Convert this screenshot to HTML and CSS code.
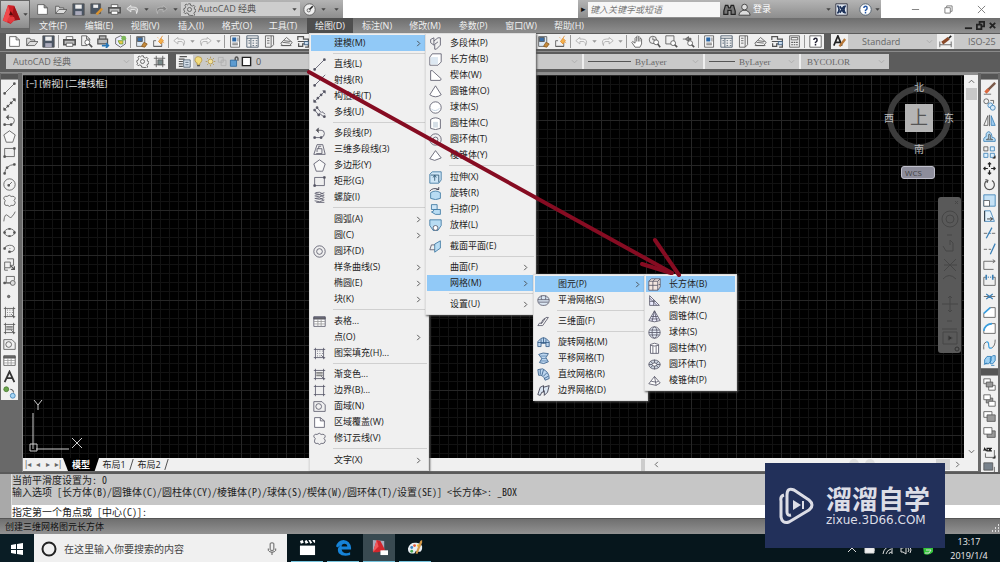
FILE: index.html
```html
<!DOCTYPE html>
<html lang="zh-CN">
<head>
<meta charset="utf-8">
<meta name="viewport" content="width=device-width, initial-scale=1">
<title>AutoCAD 经典</title>
<link rel="stylesheet" href="styles.css">
</head>
<body>
<svg class="sprite" aria-hidden="true">
  <!-- file and view commands -->
  <symbol id="new" viewBox="0 0 16 16"><path d="M2 2h8l4 4v8H2zM10 2v4h4" fill="#fff"/></symbol>
  <symbol id="open" viewBox="0 0 16 16"><path d="M2 13V4h4l1 2h5v2M2 13l4-5h10l-4 5z" fill="#ddd"/></symbol>
  <symbol id="save" viewBox="0 0 16 16"><path d="M1 1h14v14H1z" fill="#4a5563"/><path d="M4 2h8v5H4z" fill="#eee" stroke="none"/><path d="M4 10h8v5H4z" fill="#aab" stroke="none"/></symbol>
  <symbol id="saveas" viewBox="0 0 16 16"><path d="M1 1h12v12H1z" fill="#4a5563"/><path d="M4 2h6v4H4z" fill="#eee" stroke="none"/><path d="M8 14l7-7" stroke="#d9932f" stroke-width="3"/></symbol>
  <symbol id="print" viewBox="0 0 16 16"><path d="M4 6V2h8v4" fill="#fff"/><path d="M1 6h14v6H1z" fill="#bbb" stroke-width="2"/><path d="M4 10h8v4H4z" fill="#fff"/></symbol>
  <symbol id="preview" viewBox="0 0 16 16"><path d="M9 13H2V1h6l4 4v2M8 1v4h4"/><circle cx="9" cy="9" r="3" fill="#fff"/><path d="M11 11l4 4" stroke-width="2"/></symbol>
  <symbol id="publish" viewBox="0 0 16 16"><path d="M3 5V1h8v4M1 5h12v6H1z" fill="#bbb" stroke-width="1.5"/><path d="M6 13h8M11 10l3 3-3 3" stroke="#2777b8" stroke-width="2"/></symbol>
  <symbol id="dwf" viewBox="0 0 16 16"><path d="M2 4l6-3 6 3v7l-6 4-6-4z" fill="#eef"/><path d="M5 7h6v4H7z" fill="#efc84a" stroke="#68a038"/><circle cx="12" cy="4" r="3" fill="#7db85a" stroke="none"/></symbol>
  <symbol id="paste" viewBox="0 0 16 16"><path d="M2 2h10v12H2z" fill="#dce9f5"/><path d="M3 3h6v5H3z" fill="#3a6fa8"/><path d="M8 14l3-5 4 2-3 4z" fill="#c58a3a" stroke="#8a5a20"/></symbol>
  <symbol id="match" viewBox="0 0 16 16"><path d="M2 7h3M2 7v7h10V9M2 14h10"/><path d="M8 8l3-4 3 3-3 4z" fill="#f3b04a" stroke="#e08a2a"/><path d="M11 4l2-3M7 3l1 1M14 9l1 1" stroke="#e08a2a"/></symbol>
  <symbol id="undo" viewBox="0 0 16 16"><path d="M6 3L1 7l5 4V8h4q3 0 3 5 4-8-4-8H6z" fill="currentColor" fill-opacity=".25"/></symbol>
  <symbol id="redo" viewBox="0 0 16 16"><path d="M10 3l5 4-5 4V8H6q-3 0-3 5-4-8 4-8h3z" fill="currentColor" fill-opacity=".25"/></symbol>
  <symbol id="props" viewBox="0 0 16 16"><path d="M2 1h11v14H2z" fill="#fff"/><path d="M4 3h5v5H4z" fill="#2a66a5" stroke="none"/><path d="M4 10h7M4 12h7M11 3v5"/></symbol>
  <symbol id="center" viewBox="0 0 16 16"><path d="M1 1h14v14H1zM1 4h14M6 4v11M8 7h2M12 7h2M8 10h2M12 10h2M8 13h2M12 13h2M3 7h2M3 10h2" stroke="#456"/></symbol>
  <symbol id="palette" viewBox="0 0 16 16"><path d="M3 1h10v11l-3 3H3zM10 1v14M5 4h3M5 7h3M5 10h3"/></symbol>
  <symbol id="sheet" viewBox="0 0 16 16"><path d="M1 10l7-7 7 6-3 4H3zM3 9l9 1M5 7l8 1M1 13h13"/></symbol>
  <symbol id="markup" viewBox="0 0 16 16"><path d="M1 6V2h7v3h6v4M2 10v4h5v-3h7v4h-4M1 8h12" stroke-width="1.5"/><path d="M9 8h5v4H9z" fill="#cde" stroke="#357"/></symbol>
  <symbol id="calc" viewBox="0 0 16 16"><path d="M2 1h12v14H2zM4 3h8v3H4z"/><path d="M4 9h2M7 9h2M10 9h2M4 12h2M7 12h2M10 12h2" stroke-width="1.5"/></symbol>
  <symbol id="help" viewBox="0 0 16 16"><path d="M1 1h14v14H1z" fill="#fff"/><path d="M6 6q0-2 2-2t2 2-2 3v1M8 11v2" stroke="#223" stroke-width="1.8"/></symbol>
  <symbol id="hand" viewBox="0 0 16 16"><path d="M5 15l-4-6 1-1 3 2V4l1-1 1 1V2l1-1 1 1v1l1-1 1 1v2l1-1 1 1v6l-2 4z" fill="#fff"/><path d="M7 4v4M9 3v5M11 5v3"/></symbol>
  <symbol id="zoomr" viewBox="0 0 16 16"><circle cx="6" cy="6" r="4.5"/><path d="M6 3v3h3"/><circle cx="10" cy="9" r="3" fill="#fff"/><path d="M12 11l3 4" stroke-width="2"/></symbol>
  <symbol id="zoomw" viewBox="0 0 16 16"><path d="M1 1h10v10H1z"/><circle cx="10" cy="10" r="3" fill="#fff"/><path d="M12 12l3 3" stroke-width="2"/></symbol>
  <symbol id="zoomp" viewBox="0 0 16 16"><path d="M8 2L4 5l4 3V6h3V4H8zM4 5H1" fill="#888"/><circle cx="10" cy="10" r="3" fill="#fff"/><path d="M12 12l3 3" stroke-width="2"/></symbol>
  <symbol id="gear" viewBox="0 0 16 16"><path d="M7 1h2l.5 2 2 .8 1.8-1 1.4 1.5-1 1.8.8 1.900 1.500.5v2l-1.700.5-.8 1.900 1 1.800-1.500 1.400-1.800-1-1.900.8L9 15H7l-.5-2-2-.8-1.800 1-1.400-1.500 1-1.800L1.500 9.500 1 9V7l1.500-.5.8-2-1-1.800 1.500-1.400 1.800 1z"/><circle cx="8" cy="8" r="2.500"/></symbol>
  <symbol id="frame" viewBox="0 0 16 16"><path d="M1 4h14M4 1v14M12 1v14M1 12h14"/><path d="M6 6h6v6H6z" fill="#788"/></symbol>
  <symbol id="layers" viewBox="0 0 16 16"><path d="M2 2h9M1 5h7M1 8h5M1 11h5M1 14h5" stroke-width="1.500"/><path d="M7 6h8v9H7zM9 9h4M9 12h4" fill="#dce6f0" stroke="#456"/></symbol>
  <symbol id="bulb" viewBox="0 0 16 16"><path d="M5 10Q2 7 3 4q2-4 5-3 5 0 5 5-1 3-3 5v2H6v-3z" fill="#f3dc7c" stroke="#aa8b3a"/><path d="M6 14h4" stroke-width="2"/></symbol>
  <symbol id="sun" viewBox="0 0 16 16"><circle cx="8" cy="8" r="3.500" fill="#f3e29a" stroke="#a98a3a"/><path d="M8 1v2M8 13v2M1 8h2M13 8h2M3 3l1.500 1.500M11.500 11.500L13 13M3 13l1.500-1.500M11.500 4.500L13 3" stroke="#a98a3a"/></symbol>
  <symbol id="freeze" viewBox="0 0 16 16"><path d="M2 2h7v7H2zM6 6h7v8H6z" stroke="#aaa"/></symbol>
  <symbol id="lock" viewBox="0 0 16 16"><path d="M2 6h9v9H2z" fill="#5c9bd0" stroke="#1c5a90"/><path d="M9 6V3q2-3 4 0v4" stroke-width="2"/></symbol>
  <symbol id="square" viewBox="0 0 16 16"><path d="M2 2h12v12H2z" fill="#fff" stroke="#222" stroke-width="2"/></symbol>
  <symbol id="textstyle" viewBox="0 0 16 16"><path d="M1 13L6 1l5 12M3 9h6" stroke="#222" stroke-width="2"/><path d="M8 14l7-9" stroke="#b8793a" stroke-width="3"/></symbol>
  <symbol id="dimstyle" viewBox="0 0 16 16"><path d="M1 8v7M15 8v7M1 12h14"/><path d="M4 10l8-6" stroke="#8a4a2a" stroke-width="4"/><path d="M12 4l3-3" stroke="#222" stroke-width="2"/></symbol>
  <symbol id="binoc" viewBox="0 0 16 16"><path d="M3 3h3l1 3h2l1-3h3l2 7v4h-5v-5H6v5H1v-4z" fill="#777" stroke="#222" stroke-width="1.500"/></symbol>
  <symbol id="person" viewBox="0 0 16 16"><circle cx="8" cy="5" r="3.500" fill="#ddd" stroke="#333"/><path d="M1 15q0-4 5-6h4q5 2 5 6z" fill="#ddd" stroke="#333"/></symbol>
  <symbol id="exchange" viewBox="0 0 16 16"><path d="M1 1h14v14H1z" fill="#dfe6ef" stroke="#223"/><path d="M3 3q4 5 0 10M13 3q-4 5 0 10M6 4l5 8M11 4l-5 8" stroke="#1d3158" stroke-width="2"/></symbol>
  <symbol id="helpc" viewBox="0 0 16 16"><circle cx="8" cy="8" r="7" fill="#fff" stroke="#456"/><path d="M6 6q0-2 2-2t2 2-2 3v1M8 11v2" stroke="#2457a5" stroke-width="1.800"/></symbol>
  <symbol id="compass" viewBox="0 0 16 16"><circle cx="8" cy="8" r="7" fill="#eee"/><path d="M8 8l4-4" stroke="#222" stroke-width="2"/><circle cx="7" cy="9" r="2"/></symbol>
  <symbol id="caret" viewBox="0 0 16 16"><path d="M3 5h10l-5 6z" fill="currentColor" stroke="none"/></symbol>
  <symbol id="chev" viewBox="0 0 16 16"><path d="M5 2l6 6-6 6" stroke-width="2"/></symbol>
  <!-- draw commands -->
  <symbol id="line" viewBox="0 0 16 16"><path d="M2 14L14 2"/><path d="M1 13h2v2H1zM13 1h2v2h-2z" fill="#555"/></symbol>
  <symbol id="ray" viewBox="0 0 16 16"><path d="M2 14L15 1"/><path d="M1 13h2v2H1zM10 4h2v2h-2z" fill="#555"/></symbol>
  <symbol id="xline" viewBox="0 0 16 16"><path d="M1 15L15 1"/><path d="M1 12v3h3zM15 4V1h-3zM5 9h2v2H5zM9 5h2v2H9z" fill="#555"/></symbol>
  <symbol id="mline" viewBox="0 0 16 16"><path d="M2 5l5 6 1-2 6 5M5 2l5 6 1-1 4 3"/><path d="M1 4h2v2H1zM4 1h2v2H4zM13 12h2v2h-2zM6 10h2v2H6z" fill="#555"/></symbol>
  <symbol id="pline" viewBox="0 0 16 16"><path d="M2 13h8q4-1 4-5t-4-4H5"/><path d="M7 1L4 4l3 3" fill="#555"/><path d="M1 12h2v2H1zM9 12h2v2H9z" fill="#555"/></symbol>
  <symbol id="p3d" viewBox="0 0 16 16"><path d="M1 14h14L12 2H5L3 8zM5 11V7h6v6H4M7 7V4h3"/></symbol>
  <symbol id="polygon" viewBox="0 0 16 16"><path d="M8 1l7 5-3 9H4L1 6z" fill="#f8f8f8"/></symbol>
  <symbol id="rect" viewBox="0 0 16 16"><path d="M2 3h12v10H2z" fill="#eee"/><path d="M1 12h2v2H1zM13 2h2v2h-2z" fill="#555"/></symbol>
  <symbol id="helix" viewBox="0 0 16 16"><path d="M2 3q6 3 12-1M2 6q6 3 12-1M2 9q6 3 12-1M2 12q6 3 12-1M3 2q5-2 10 2M3 5q5-2 10 2M3 9q5-2 10 2M4 14h10"/></symbol>
  <symbol id="arc" viewBox="0 0 16 16"><path d="M2 14Q3 4 14 3"/><path d="M1 13h2v2H1zM4 6h2v2H4zM13 2h2v2h-2z" fill="#555"/></symbol>
  <symbol id="circle" viewBox="0 0 16 16"><circle cx="8" cy="8" r="7"/><path d="M7 9l4-4"/><path d="M6 8h2v2H6z" fill="#555"/></symbol>
  <symbol id="donut" viewBox="0 0 16 16"><circle cx="8" cy="8" r="7"/><circle cx="8" cy="8" r="3.500"/></symbol>
  <symbol id="cloud" viewBox="0 0 16 16"><path d="M5 3q3-3 5 0 5-1 5 3-3 2 0 4 0 5-5 4-2 3-4 0-5 1-4-4 2-2-1-4 0-4 4-3z"/></symbol>
  <symbol id="spline" viewBox="0 0 16 16"><path d="M1 14Q2 3 6 7t5 1q3-3 4-6"/></symbol>
  <symbol id="ellipse" viewBox="0 0 16 16"><ellipse cx="8" cy="8" rx="6.500" ry="4.500"/><path d="M1 7h2v2H1zM13 7h2v2h-2zM7 3h2v1H7zM7 12h2v1H7z" fill="#555"/></symbol>
  <symbol id="ellarc" viewBox="0 0 16 16"><path d="M2 8q1-4 6-4 6 0 6 4t-5 4"/><path d="M1 7h2v2H1zM7 11h2v2H7zM8 8h1" fill="#555"/></symbol>
  <symbol id="insert" viewBox="0 0 16 16"><path d="M5 1h8v8h-3M2 5h7v7H2zM2 12v3h4"/><path d="M9 9l5 5M14 10v4h-4" stroke-width="1.500"/></symbol>
  <symbol id="block" viewBox="0 0 16 16"><path d="M4 3h10v5M4 3v8h5M1 11h8"/><path d="M1 10h2v2H1z" fill="#555"/><circle cx="12" cy="11" r="3" fill="#ddd"/></symbol>
  <symbol id="point" viewBox="0 0 16 16"><circle cx="7" cy="8" r="1.500" fill="#777"/></symbol>
  <symbol id="hatch" viewBox="0 0 16 16"><path d="M3 1v14M13 1v14M1 3h14M1 13h14"/><path d="M5 5h1M8 5h1M11 5h1M5 8h1M8 8h1M11 8h1M5 11h1M8 11h1M10 10l4 4"/></symbol>
  <symbol id="gradient" viewBox="0 0 16 16"><path d="M3 1v14M13 1v14M1 3h14M1 13h14"/><path d="M4 6h8M4 9h8" stroke-width="2" stroke="#888"/><path d="M10 10l4 4"/></symbol>
  <symbol id="boundary" viewBox="0 0 16 16"><path d="M3 1v14M13 1v14M1 3h14M1 13h14"/></symbol>
  <symbol id="region" viewBox="0 0 16 16"><path d="M1 2h10l4 4v8H1z"/><circle cx="7" cy="8" r="3.500"/></symbol>
  <symbol id="wipe" viewBox="0 0 16 16"><path d="M2 2h7v4h5v8H2z" fill="#fff"/><path d="M9 2l5 4"/></symbol>
  <symbol id="table" viewBox="0 0 16 16"><path d="M1 2h14v12H1z" fill="#fff"/><path d="M1 3h14v2H1z" fill="#666"/><path d="M1 8h14M1 11h14M6 5v9M10 5v9" stroke="#999"/></symbol>
  <symbol id="mtext" viewBox="0 0 16 16"><path d="M2 15L8 2l6 13M4 10h8" stroke="#333" stroke-width="2.200"/></symbol>
  <symbol id="addsel" viewBox="0 0 16 16"><circle cx="4" cy="4" r="3" fill="#69a44a" stroke="#487a30"/><circle cx="12" cy="12" r="3" fill="#a6d5f5" stroke="#3a7fb5"/><path d="M9 4q4 0 4 4" stroke="#222"/></symbol>
  <!-- solids -->
  <symbol id="psolid" viewBox="0 0 16 16"><path d="M2 3l4-2v9l-4-3zM6 5l5-4h3v9l-5 5H7V9l4-3"/></symbol>
  <symbol id="box" viewBox="0 0 16 16"><path d="M1 5l3-4h11v10l-4 4H1z" fill="#fff"/><path d="M2 5h9v9H2z" fill="#dde8f2" stroke="none"/></symbol>
  <symbol id="wedge" viewBox="0 0 16 16"><path d="M2 2v12h12l1-2L4 2z" fill="#fff"/></symbol>
  <symbol id="cone" viewBox="0 0 16 16"><path d="M8 1L1 12q7 5 14 0z" fill="#fff"/></symbol>
  <symbol id="sphere" viewBox="0 0 16 16"><circle cx="8" cy="8" r="7" fill="#fff"/><path d="M3 10q5 4 10-1" stroke="#bcd"/></symbol>
  <symbol id="cyl" viewBox="0 0 16 16"><path d="M2 3q6-4 12 0v11q-6 3-12 0z" fill="#fff"/><path d="M5 6h6v7H5z" fill="#d5dee6" stroke="none"/></symbol>
  <symbol id="torus" viewBox="0 0 16 16"><circle cx="8" cy="8" r="7"/><circle cx="8" cy="8" r="3"/></symbol>
  <symbol id="pyr" viewBox="0 0 16 16"><path d="M8 2L1 12l6 2 8-3z" fill="#fff"/></symbol>
  <symbol id="extrude" viewBox="0 0 16 16"><path d="M1 4l3-3h11v10l-3 4H1z" fill="#cfe6f6" stroke="#37749f"/><path d="M7 12V6M5 8l2-3 2 3M2 5h10v9" stroke="#27516f"/></symbol>
  <symbol id="revolve" viewBox="0 0 16 16"><path d="M2 7q6-4 12 0v7q-6 3-12 0z" fill="#b8dcf3" stroke="#37749f"/><path d="M1 5q4-5 11-2M12 0v3H9" stroke="#334"/></symbol>
  <symbol id="sweep" viewBox="0 0 16 16"><path d="M3 2h7v6H3z" fill="#cfe6f6" stroke="#37749f"/><path d="M6 8h8v6H8l-5-3q3 0 3-3z" fill="#b8dcf3" stroke="#37749f"/></symbol>
  <symbol id="loft" viewBox="0 0 16 16"><path d="M1 1h14v7l-4 6H5L1 8z" fill="#b8dcf3" stroke="#37749f"/><circle cx="8" cy="11" r="3" fill="#fff"/></symbol>
  <symbol id="section" viewBox="0 0 16 16"><path d="M7 5l7-4v9l-7 5z" fill="#b8dcf3" stroke="#37749f"/><path d="M7 6H3L1 12h6"/></symbol>
  <!-- meshes -->
  <symbol id="smooth" viewBox="0 0 16 16"><rect x="1" y="2" width="14" height="12" rx="6" fill="#dbe6f2"/><path d="M1 7h14M2 10h12M6 2q-2 3 0 5M10 2q2 3 0 5"/></symbol>
  <symbol id="face3d" viewBox="0 0 16 16"><path d="M1 13h6l7-10h-3l-5 7H3zM10 4l-3 2-2 5"/></symbol>
  <symbol id="revs" viewBox="0 0 16 16"><path d="M1 13V7q7-10 14 0v6h-4V9H5v4z" fill="#bdd6ef" stroke="#335a85"/><path d="M8 2v7M1 8h14M5 4v5M11 4v5" stroke="#335a85"/></symbol>
  <symbol id="tabs" viewBox="0 0 16 16"><path d="M2 3q5-3 12-1l-3 5 3 5q-6 4-11 1l3-5z" fill="#bdd6ef" stroke="#335a85"/><path d="M4 5h8M5 8h6M4 11h9" stroke="#5a83ad"/></symbol>
  <symbol id="rules" viewBox="0 0 16 16"><path d="M1 2l6-1q8 4 8 12l-5 2Q8 8 2 9z" fill="#bdd6ef" stroke="#335a85"/><path d="M4 2v6M8 2L6 9M12 6l-4 4M14 10l-5 3" stroke="#335a85"/></symbol>
  <symbol id="edges" viewBox="0 0 16 16"><path d="M1 13L4 4l4-2v8H6l-2 4zM8 4l7-2-2 8-4 4V8" fill="#dbe6f2" stroke="#334"/></symbol>
  <symbol id="mbox" viewBox="0 0 16 16"><path d="M1 4l3-3h11v10l-3 4H1z" fill="#f4e6df"/><path d="M1 4h11v11M12 4l3-3M6 4v11M1 9h11M6 4l3-3M13 8h2"/></symbol>
  <symbol id="mwedge" viewBox="0 0 16 16"><path d="M2 2v12h12zM2 9h7M7 14V7M2 5l9 9" fill="#eef"/></symbol>
  <symbol id="mcone" viewBox="0 0 16 16"><path d="M8 1L1 13q7 3 14 0zM8 1L5 14M8 1l3 13M4 8h8M3 11h10" fill="#eef"/></symbol>
  <symbol id="msphere" viewBox="0 0 16 16"><circle cx="8" cy="8" r="7" fill="#e8eef8"/><ellipse cx="8" cy="8" rx="3" ry="7"/><path d="M1 8h14M2 5h12M2 11h12"/></symbol>
  <symbol id="mcyl" viewBox="0 0 16 16"><path d="M3 3q5-3 10 0v11H3z" fill="#fff"/><path d="M3 4q5 2 10 0M6 5v9M10 5v9"/></symbol>
  <symbol id="mtorus" viewBox="0 0 16 16"><ellipse cx="8" cy="8" rx="7" ry="5.500" fill="#ccd5df"/><ellipse cx="8" cy="8" rx="3" ry="2" fill="#fff"/><path d="M8 2v4M8 10v4M1 8h4M11 8h4M3 4l3 3M13 4l-3 3M3 12l3-3M13 12l-3-3"/></symbol>
  <symbol id="mpyr" viewBox="0 0 16 16"><path d="M8 3L1 12l9 2 5-3zM8 3l2 11M4 9l6 1 3-1" fill="#fff"/></symbol>
  <!-- modify commands -->
  <symbol id="erase" viewBox="0 0 16 16"><path d="M5 11L15 1" stroke="#7a5a4a" stroke-width="3"/><path d="M3 13l4-4" stroke="#d8673e" stroke-width="4"/><path d="M1 15h9"/></symbol>
  <symbol id="copy" viewBox="0 0 16 16"><circle cx="4" cy="4" r="3"/><path d="M9 3h4v4"/><circle cx="9" cy="9" r="3" fill="#d8eaf8" stroke="#3a7fb5"/><circle cx="12" cy="12" r="3" fill="#d8eaf8" stroke="#3a7fb5"/></symbol>
  <symbol id="mirror" viewBox="0 0 16 16"><path d="M6 2v12H1zM8 1v14"/><path d="M10 2v12h5z" fill="#9ecbef" stroke="#3a7fb5"/></symbol>
  <symbol id="offset" viewBox="0 0 16 16"><path d="M1 14h14q1-5-4-5 0-6-4-7-4 1-3 6-4 1-3 6z" fill="#b8dcf3" stroke="#3a7fb5"/><path d="M4 12h8q0-1-3-1V6q-2-2-2 0v5q-3 0-3 1"/></symbol>
  <symbol id="array" viewBox="0 0 16 16"><path d="M1 1h5v5H1z"/><path d="M9 1h5v5H9zM1 9h5v5H1zM9 9h5v5H9z" stroke="#3a7fb5" fill="#e0f0fb"/><path d="M15 12v3h-3z" fill="#111"/></symbol>
  <symbol id="move" viewBox="0 0 16 16"><path d="M8 1v5M8 10v5M1 8h5M10 8h5M6 3l2-2 2 2M6 13l2 2 2-2M3 6L1 8l2 2M13 6l2 2-2 2" stroke="#222" stroke-width="1.500"/></symbol>
  <symbol id="rotate" viewBox="0 0 16 16"><path d="M5 3a6 6 0 1 0 6 0M3 2l3 1-1 3" stroke-width="1.500"/></symbol>
  <symbol id="scale" viewBox="0 0 16 16"><path d="M1 1h14v14H1z" fill="#c5e1f5" stroke="#3a7fb5"/><path d="M1 8h7v7H1z" fill="#fff"/></symbol>
  <symbol id="stretch" viewBox="0 0 16 16"><path d="M2 1h7l5 13H2z" fill="#e5f2fb" stroke="#3a7fb5"/><path d="M2 1v13M5 11h6M9 9l3 2-3 2" stroke="#222"/></symbol>
  <symbol id="trim" viewBox="0 0 16 16"><path d="M1 9h4M11 9h4"/><path d="M6 9h4" stroke="#3a7fb5"/><path d="M11 2L4 15" stroke="#3a7fb5" stroke-width="1.500"/></symbol>
  <symbol id="extend" viewBox="0 0 16 16"><path d="M1 9h4M7 9h3" /><path d="M15 2L9 15" stroke="#3a7fb5" stroke-width="1.500"/></symbol>
  <symbol id="breakp" viewBox="0 0 16 16"><path d="M1 14V4h13M12 2l3 2-3 2M1 14h12"/></symbol>
  <symbol id="break" viewBox="0 0 16 16"><path d="M4 4H1v10h14V4h-3"/><path d="M4 1v6M12 1v6M6 4h1M9 4h1" stroke="#3a7fb5" stroke-width="2"/></symbol>
  <symbol id="join" viewBox="0 0 16 16"><path d="M1 8h14"/><path d="M4 5l4 3-4 3M12 5L8 8l4 3" stroke="#3a7fb5" stroke-width="1.500"/></symbol>
  <symbol id="chamfer" viewBox="0 0 16 16"><path d="M1 14h14V2H9L1 9z" fill="#fff"/><path d="M1 9l8-7" stroke="#3a9fe0" stroke-width="2"/></symbol>
  <symbol id="fillet" viewBox="0 0 16 16"><path d="M1 14h14V2h-4Q2 3 1 11z" fill="#fff"/><path d="M1 11Q2 3 11 2" stroke="#3a9fe0" stroke-width="2"/></symbol>
  <symbol id="blend" viewBox="0 0 16 16"><path d="M1 14Q0 6 4 5M11 12q4-2 4-10"/><path d="M4 5q3-1 3 4t4 3" stroke="#3a9fe0" stroke-width="1.500"/></symbol>
  <symbol id="explode" viewBox="0 0 16 16"><path d="M2 7l3-4h5v5l-3 4H2zM9 5l3-3h3v6l-3 4H9z" fill="#9ed0f2" stroke="#2879b5"/><path d="M1 13l4-2M10 14h4" stroke="#2879b5"/></symbol>
  <symbol id="front" viewBox="0 0 16 16"><path d="M1 1h8v6H1zM7 9h8v6H7z" fill="#fff"/><path d="M4 5h8v6H4z" fill="#999"/></symbol>
  <symbol id="back" viewBox="0 0 16 16"><path d="M4 5h8v6H4z" fill="#999"/><path d="M1 1h8v6H1zM7 9h8v6H7z" fill="#fff"/></symbol>
  <symbol id="above" viewBox="0 0 16 16"><path d="M1 2h10v7H1z" fill="#fff"/><path d="M5 6h10v8H5z" fill="#999"/></symbol>
  <symbol id="under" viewBox="0 0 16 16"><path d="M5 6h10v8H5z" fill="#999"/><path d="M1 2h10v8H1z" fill="#fff"/></symbol>
  <symbol id="textfront" viewBox="0 0 16 16"><path d="M1 6l1-3 2 3M5 2v4h3V3H5M11 3H9v3h2" stroke="#222" stroke-width="1.500"/><path d="M3 9v5h11V5"/><path d="M15 12v3h-3z" fill="#111"/></symbol>
  <symbol id="hatchback" viewBox="0 0 16 16"><path d="M1 1h11v9H1z" fill="#78828c"/><path d="M5 13h9V6"/></symbol>
</svg>

<div class="app">
  <header class="head">
    <button class="logo" aria-label="应用程序菜单">
      <svg class="logo-mark" viewBox="0 0 22 24"><path d="M1 19L7 1l7 1 7 16-7 1-4 4z" fill="#cf2027"/><path d="M1 19L7 1l3 11-4 9z" fill="#f0494c"/><path d="M14 2l7 16-7 1-2-8z" fill="#9d1218"/><path d="M8 13l2-5 3 5z" fill="#5a0a0d"/><path d="M6 19l2-4h6l1 3-5 4z" fill="#e23a3f"/></svg>
      <svg class="caret"><use href="#caret"/></svg>
    </button>
    <div class="head-rows">
      <div class="titlebar">
        <div class="quick">
          <button aria-label="新建"><svg><use href="#new"/></svg></button>
          <button aria-label="打开"><svg><use href="#open"/></svg></button>
          <button aria-label="保存"><svg><use href="#save"/></svg></button>
          <button aria-label="另存为"><svg><use href="#saveas"/></svg></button>
          <button aria-label="打印"><svg><use href="#print"/></svg></button>
          <button class="light" aria-label="放弃"><svg><use href="#undo"/></svg></button>
          <svg class="caret"><use href="#caret"/></svg>
          <button class="faint" aria-label="重做"><svg><use href="#redo"/></svg></button>
          <svg class="caret"><use href="#caret"/></svg>
          <div class="workspace-pick">
            <svg><use href="#gear"/></svg>
            <select aria-label="工作空间"><option>AutoCAD 经典</option></select>
            <svg class="caret"><use href="#caret"/></svg>
          </div>
          <button aria-label="视图"><svg><use href="#compass"/></svg></button>
          <svg class="caret"><use href="#caret"/></svg>
          <button class="more" aria-label="自定义"><svg class="caret"><use href="#caret"/></svg></button>
        </div>
        <div class="infocenter">
          <button class="collapse" aria-label="收起">▸</button>
          <input type="text" aria-label="搜索" placeholder="键入关键字或短语">
          <button aria-label="查找"><svg><use href="#binoc"/></svg></button>
          <button class="login"><svg><use href="#person"/></svg>登录</button>
          <svg class="caret"><use href="#caret"/></svg>
          <button class="exchange" aria-label="Exchange"><svg><use href="#exchange"/></svg></button>
          <button class="help" aria-label="帮助"><svg><use href="#helpc"/></svg></button>
          <svg class="caret"><use href="#caret"/></svg>
        </div>
        <div class="wincontrols">
          <button aria-label="最小化"><svg viewBox="0 0 10 10"><path d="M1 5h8"/></svg></button>
          <button aria-label="还原"><svg viewBox="0 0 10 10"><path d="M1 3h6v6H1zM3 3V1h6v6H7"/></svg></button>
          <button aria-label="关闭"><svg viewBox="0 0 10 10"><path d="M1 1l8 8M9 1L1 9"/></svg></button>
        </div>
      </div>
      <nav class="menubar">
        <button>文件(F)</button><button>编辑(E)</button><button>视图(V)</button><button>插入(I)</button><button>格式(O)</button><button>工具(T)</button><button class="open">绘图(D)</button><button>标注(N)</button><button>修改(M)</button><button>参数(P)</button><button>窗口(W)</button><button>帮助(H)</button>
        <div class="mdi">
          <button aria-label="最小化图形"><svg viewBox="0 0 10 10"><path d="M1 8h8"/></svg></button>
          <button aria-label="还原图形"><svg viewBox="0 0 10 10"><path d="M1 4h5v5H1zM4 4V1h5v5H6"/></svg></button>
          <button aria-label="关闭图形"><svg viewBox="0 0 10 10"><path d="M2 2l6 6M8 2L2 8"/></svg></button>
        </div>
      </nav>
    </div>
  </header>

  <div class="bar">
    <div class="tools tools-main">
      <button aria-label="新建"><svg><use href="#new"/></svg></button><button aria-label="打开"><svg><use href="#open"/></svg></button><button aria-label="保存"><svg><use href="#save"/></svg></button><i></i>
      <button aria-label="打印"><svg><use href="#print"/></svg></button><button aria-label="预览"><svg><use href="#preview"/></svg></button><button aria-label="发布"><svg><use href="#publish"/></svg></button><button aria-label="三维DWF"><svg><use href="#dwf"/></svg></button><i></i>
      <button aria-label="粘贴"><svg><use href="#paste"/></svg></button><button aria-label="特性匹配"><svg><use href="#match"/></svg></button><i></i>
      <button class="off" aria-label="放弃"><svg><use href="#undo"/></svg></button><svg class="caret"><use href="#caret"/></svg><button class="off" aria-label="重做"><svg><use href="#redo"/></svg></button><svg class="caret"><use href="#caret"/></svg><i></i>
      <button aria-label="特性"><svg><use href="#props"/></svg></button><button aria-label="设计中心"><svg><use href="#center"/></svg></button><button aria-label="工具选项板"><svg><use href="#palette"/></svg></button><button aria-label="图纸集"><svg><use href="#sheet"/></svg></button><button aria-label="标记集"><svg><use href="#markup"/></svg></button><button aria-label="计算器"><svg><use href="#calc"/></svg></button><i></i>
      <button aria-label="帮助"><svg><use href="#help"/></svg></button>
    </div>
    <div class="tools">
      <button aria-label="新建"><svg><use href="#new"/></svg></button><button aria-label="打开"><svg><use href="#open"/></svg></button><button aria-label="保存"><svg><use href="#save"/></svg></button><i></i>
      <button aria-label="打印"><svg><use href="#print"/></svg></button><button aria-label="预览"><svg><use href="#preview"/></svg></button><button aria-label="发布"><svg><use href="#publish"/></svg></button><button aria-label="三维DWF"><svg><use href="#dwf"/></svg></button><i></i>
      <button aria-label="粘贴"><svg><use href="#paste"/></svg></button><button aria-label="特性匹配"><svg><use href="#match"/></svg></button><i></i>
      <button class="off" aria-label="放弃"><svg><use href="#undo"/></svg></button><svg class="caret"><use href="#caret"/></svg><button class="off" aria-label="重做"><svg><use href="#redo"/></svg></button><svg class="caret"><use href="#caret"/></svg><i></i>
      <button aria-label="平移"><svg><use href="#hand"/></svg></button><button aria-label="实时缩放"><svg><use href="#zoomr"/></svg></button><button aria-label="窗口缩放"><svg><use href="#zoomw"/></svg></button><button aria-label="缩放上一个"><svg><use href="#zoomp"/></svg></button><i></i>
      <button aria-label="特性"><svg><use href="#props"/></svg></button><button aria-label="设计中心"><svg><use href="#center"/></svg></button><button aria-label="工具选项板"><svg><use href="#palette"/></svg></button><button aria-label="图纸集"><svg><use href="#sheet"/></svg></button><button aria-label="标记集"><svg><use href="#markup"/></svg></button><button aria-label="计算器"><svg><use href="#calc"/></svg></button><i></i>
      <button aria-label="帮助"><svg><use href="#help"/></svg></button>
    </div>
    <div class="tools styles">
      <button aria-label="文字样式"><svg><use href="#textstyle"/></svg></button>
      <label class="combo"><select aria-label="文字样式名"><option>Standard</option></select><svg class="chev down"><use href="#chev"/></svg></label>
      <button aria-label="标注样式"><svg><use href="#dimstyle"/></svg></button>
      <label class="combo"><select aria-label="标注样式名"><option>ISO-25</option></select></label>
    </div>
  </div>

  <div class="bar bar-low">
    <div class="tools workspaces">
      <label class="combo"><select aria-label="工作空间"><option>AutoCAD 经典</option></select><svg class="chev down"><use href="#chev"/></svg></label>
      <button aria-label="工作空间设置"><svg><use href="#gear"/></svg></button><button aria-label="我的工作空间"><svg><use href="#frame"/></svg></button>
    </div>
    <div class="tools layers">
      <button aria-label="图层特性"><svg><use href="#layers"/></svg></button>
      <div class="layer-state"><svg><use href="#bulb"/></svg><svg><use href="#sun"/></svg><svg><use href="#freeze"/></svg><svg><use href="#lock"/></svg><svg><use href="#square"/></svg><span>0</span></div>
      <svg class="chev down"><use href="#chev"/></svg>
    </div>
    <div class="tools linestyles">
      <svg class="chev down"><use href="#chev"/></svg>
      <label class="combo"><span class="stroke long"></span><select aria-label="线型"><option>ByLayer</option></select><svg class="chev down"><use href="#chev"/></svg></label>
      <label class="combo narrow"><span class="stroke"></span><select aria-label="线宽"><option>ByLayer</option></select><svg class="chev down"><use href="#chev"/></svg></label>
      <label class="combo plot"><select aria-label="打印样式"><option>BYCOLOR</option></select><svg class="chev down"><use href="#chev"/></svg></label>
    </div>
  </div>

  <main class="work">
    <aside class="side side-left">
      <span class="grip"></span>
      <button aria-label="直线"><svg><use href="#line"/></svg></button><button aria-label="构造线"><svg><use href="#xline"/></svg></button><button aria-label="多段线"><svg><use href="#pline"/></svg></button><button aria-label="多边形"><svg><use href="#polygon"/></svg></button><button aria-label="矩形"><svg><use href="#rect"/></svg></button><button aria-label="圆弧"><svg><use href="#arc"/></svg></button><button aria-label="圆"><svg><use href="#circle"/></svg></button><button aria-label="修订云线"><svg><use href="#cloud"/></svg></button><button aria-label="样条曲线"><svg><use href="#spline"/></svg></button><button aria-label="椭圆"><svg><use href="#ellipse"/></svg></button><button aria-label="椭圆弧"><svg><use href="#ellarc"/></svg></button><button aria-label="插入块"><svg><use href="#insert"/></svg></button><button aria-label="创建块"><svg><use href="#block"/></svg></button><button aria-label="点"><svg><use href="#point"/></svg></button><button aria-label="图案填充"><svg><use href="#hatch"/></svg></button><button aria-label="渐变色"><svg><use href="#gradient"/></svg></button><button aria-label="面域"><svg><use href="#region"/></svg></button><button aria-label="表格"><svg><use href="#table"/></svg></button><button aria-label="多行文字"><svg><use href="#mtext"/></svg></button><button aria-label="添加选定对象"><svg><use href="#addsel"/></svg></button>
    </aside>

    <section class="drawing">
      <div class="canvas-row">
        <div class="canvas">
          <div class="viewlabel">[−] [俯视] [二维线框]</div>
          <div class="viewcube">
            <svg class="ring" viewBox="0 0 66 66"><circle cx="33" cy="33" r="29"/></svg>
            <span class="face">上</span>
            <span class="n">北</span><span class="e">东</span><span class="s">南</span><span class="w">西</span>
          </div>
          <button class="wcs">WCS</button>
          <svg class="navbar" viewBox="0 0 23 156"><g fill="none" stroke="#464646"><circle cx="12" cy="22" r="8"/><circle cx="12" cy="22" r="4"/><path d="M17 4l3 3M20 4l-3 3M9 38h5M12 48v-5l3 3v8h-7l-3-5M6 62l12 12M18 62L6 74M6 68h13M5 82q6-7 13 0M12 99v16M4 107h16M10 101l2-2 2 2M10 113l2 2 2-2M9 124h5M4 132h15M5 135h14v12H5z"/></g><path d="M10 138l5 3-5 3z" fill="#333"/><circle cx="19" cy="152" r="2" fill="none" stroke="#333"/></svg>
          <svg class="ucs" viewBox="0 0 60 56"><path d="M6 51V15M9 51h33M3 46h7v7H3zM7 2l4 5 4-5M11 7v5M45 40l10 10M55 40L45 50"/></svg>
        </div>
        <div class="vscroll"><button aria-label="向上"><svg class="chev up"><use href="#chev"/></svg></button><span class="thumb"></span><button class="last" aria-label="向下"><svg class="chev down"><use href="#chev"/></svg></button></div>
      </div>
      <div class="tabs">
        <div class="tabnav"><button>|◂</button><button>◂</button><button>▸</button><button>▸|</button></div>
        <button class="tab current">模型</button>
        <button class="tab">布局1</button><svg class="slash" viewBox="0 0 6 13"><path d="M1 13L5 0"/></svg>
        <button class="tab">布局2</button><svg class="slash" viewBox="0 0 6 13"><path d="M1 13L5 0"/></svg>
        <div class="hscroll"><button aria-label="向左"><svg class="chev left"><use href="#chev"/></svg></button><span class="thumb"></span><button aria-label="向右"><svg class="chev"><use href="#chev"/></svg></button></div>
      </div>
    </section>

    <aside class="side side-right">
      <span class="grip"></span>
      <button aria-label="删除"><svg><use href="#erase"/></svg></button><button aria-label="复制"><svg><use href="#copy"/></svg></button><button aria-label="镜像"><svg><use href="#mirror"/></svg></button><button aria-label="偏移"><svg><use href="#offset"/></svg></button><button aria-label="阵列"><svg><use href="#array"/></svg></button><button aria-label="移动"><svg><use href="#move"/></svg></button><button aria-label="旋转"><svg><use href="#rotate"/></svg></button><button aria-label="缩放"><svg><use href="#scale"/></svg></button><button aria-label="拉伸"><svg><use href="#stretch"/></svg></button><button aria-label="修剪"><svg><use href="#trim"/></svg></button><button aria-label="延伸"><svg><use href="#extend"/></svg></button><button aria-label="打断于点"><svg><use href="#breakp"/></svg></button><button aria-label="打断"><svg><use href="#break"/></svg></button><button aria-label="合并"><svg><use href="#join"/></svg></button><button aria-label="倒角"><svg><use href="#chamfer"/></svg></button><button aria-label="圆角"><svg><use href="#fillet"/></svg></button><button aria-label="光顺曲线"><svg><use href="#blend"/></svg></button><button aria-label="分解"><svg><use href="#explode"/></svg></button>
      <span class="grip grip-tall"></span>
      <button aria-label="前置"><svg><use href="#front"/></svg></button><button aria-label="后置"><svg><use href="#back"/></svg></button><button aria-label="置于对象之上"><svg><use href="#above"/></svg></button><button aria-label="置于对象之下"><svg><use href="#under"/></svg></button><i></i><button aria-label="文字前置"><svg><use href="#textfront"/></svg></button><button aria-label="图案填充后置"><svg><use href="#hatchback"/></svg></button>
    </aside>
  </main>

  <section class="command">
    <div class="command-grip"></div>
    <div class="command-body">
      <p>当前平滑度设置为: 0</p>
      <p>输入选项 [长方体(B)/圆锥体(C)/圆柱体(CY)/棱锥体(P)/球体(S)/楔体(W)/圆环体(T)/设置(SE)] &lt;长方体&gt;: _BOX</p>
      <div class="prompt"><input type="text" aria-label="命令行" value="指定第一个角点或 [中心(C)]:"></div>
    </div>
  </section>

  <footer class="status"><span>创建三维网格图元长方体</span><svg class="sizer" viewBox="0 0 10 10"><path d="M8 1h1M8 4h1M8 7h1M5 4h1M5 7h1M2 7h1"/></svg></footer>

  <div class="taskbar">
    <button class="start" aria-label="开始"><svg viewBox="0 0 12 12"><path d="M0 2l5-1v5H0zM6 1l6-1v6H6zM0 7h5v4l-5-1zM6 7h6v5l-6-1z"/></svg></button>
    <label class="search"><svg viewBox="0 0 16 16"><circle cx="8" cy="8" r="6.500"/></svg><input type="text" aria-label="搜索" placeholder="在这里输入你要搜索的内容"><svg class="mic" viewBox="0 0 10 14"><rect x="3" y="1" width="4" height="8" rx="1"/><path d="M1 7v2q1 2 4 2t4-2V7M5 11v3"/></svg></label>
    <button class="task" aria-label="电影和电视"><svg viewBox="0 0 18 18"><path d="M1 7h16v10H1z" fill="#fff"/><path d="M1 2l3-1 1 3-3 1zM6 2l2-1 2 3-3 1zM10 1h2l2 3-2 1zM14 1h3v3h-1z" fill="#fff"/></svg></button>
    <button class="task" aria-label="Edge"><svg viewBox="0 0 18 18"><path d="M1 8Q3 1 9 1q7 1 8 8v2H7q1 4 5 4 2 0 4-1v3q-8 2-12-2-3-6 3-9Q4 7 3 9 2 8 1 8zM7 8h6q0-3-3-3T7 8z" fill="#1683d8"/></svg></button>
    <button class="task active" aria-label="AutoCAD"><svg viewBox="0 0 18 18"><path d="M2 1l12 1v11H2z" fill="#aab"/><path d="M2 14L6 1l4 1 5 10-8 2z" fill="#d0262c"/><path d="M2 14L6 1l2 7z" fill="#f0595c"/><path d="M10 12h8v5h-8z" fill="#fff"/></svg></button>
    <button class="task" aria-label="画图"><svg viewBox="0 0 18 18"><path d="M1 10Q3 3 10 4q7 1 6 6-1 5-5 3-2-1-3 2-7 2-7-5z" fill="#e9eef2"/><circle cx="5" cy="9" r="1.500" fill="#3a86c8"/><circle cx="8" cy="7" r="1.500" fill="#e25a3c"/><circle cx="12" cy="7" r="1.500" fill="#f0c33a"/><circle cx="5" cy="13" r="1.500" fill="#49a84f"/><path d="M9 15l5-13 2-1v3l-5 12z" fill="#d59a4a"/></svg></button>
    <div class="tray">
      <svg viewBox="0 0 12 12"><path d="M2 8l4-4 4 4"/></svg>
      <svg viewBox="0 0 12 12"><path d="M1 4h9v5H1zM10 6h1" fill="#eee"/></svg>
      <svg viewBox="0 0 12 12"><path d="M1 10Q2 3 9 2M4 10q1-4 5-5M7 10q0-2 3-2M10 2v8"/></svg>
      <svg viewBox="0 0 12 12"><path d="M1 4h2l3-2v8L3 8H1zM8 4q2 2 0 4M10 3q2 3 0 6"/></svg>
      <svg class="wide" viewBox="0 0 12 12"><path d="M1 2h10v6q-4 4-9 2z" fill="#35c43b" stroke="none"/><path d="M4 6h5l-2 3H3"/></svg>
    </div>
    <time class="clock"><span>13:17</span><span>2019/1/4</span></time>
  </div>

  <div class="menu menu-draw">
    <button class="on"><span>建模(M)</span><svg class="chev"><use href="#chev"/></svg></button><hr>
    <button><svg><use href="#line"/></svg><span>直线(L)</span></button>
    <button><svg><use href="#ray"/></svg><span>射线(R)</span></button>
    <button><svg><use href="#xline"/></svg><span>构造线(T)</span></button>
    <button><svg><use href="#mline"/></svg><span>多线(U)</span></button><hr>
    <button><svg><use href="#pline"/></svg><span>多段线(P)</span></button>
    <button><svg><use href="#p3d"/></svg><span>三维多段线(3)</span></button>
    <button><svg><use href="#polygon"/></svg><span>多边形(Y)</span></button>
    <button><svg><use href="#rect"/></svg><span>矩形(G)</span></button>
    <button><svg><use href="#helix"/></svg><span>螺旋(I)</span></button><hr class="wide">
    <button><span>圆弧(A)</span><svg class="chev"><use href="#chev"/></svg></button>
    <button><span>圆(C)</span><svg class="chev"><use href="#chev"/></svg></button>
    <button><svg><use href="#donut"/></svg><span>圆环(D)</span></button>
    <button><span>样条曲线(S)</span><svg class="chev"><use href="#chev"/></svg></button>
    <button><span>椭圆(E)</span><svg class="chev"><use href="#chev"/></svg></button>
    <button><span>块(K)</span><svg class="chev"><use href="#chev"/></svg></button><hr class="wide">
    <button><svg><use href="#table"/></svg><span>表格...</span></button>
    <button><span>点(O)</span><svg class="chev"><use href="#chev"/></svg></button>
    <button><svg><use href="#hatch"/></svg><span>图案填充(H)...</span></button><hr>
    <button><svg><use href="#gradient"/></svg><span>渐变色...</span></button>
    <button><svg><use href="#boundary"/></svg><span>边界(B)...</span></button>
    <button><svg><use href="#region"/></svg><span>面域(N)</span></button>
    <button><svg><use href="#wipe"/></svg><span>区域覆盖(W)</span></button>
    <button><svg><use href="#cloud"/></svg><span>修订云线(V)</span></button><hr class="wide">
    <button><span>文字(X)</span><svg class="chev"><use href="#chev"/></svg></button>
  </div>
  <div class="menu menu-model">
    <button><svg><use href="#psolid"/></svg><span>多段体(P)</span></button>
    <button><svg><use href="#box"/></svg><span>长方体(B)</span></button>
    <button><svg><use href="#wedge"/></svg><span>楔体(W)</span></button>
    <button><svg><use href="#cone"/></svg><span>圆锥体(O)</span></button>
    <button><svg><use href="#sphere"/></svg><span>球体(S)</span></button>
    <button><svg><use href="#cyl"/></svg><span>圆柱体(C)</span></button>
    <button><svg><use href="#torus"/></svg><span>圆环体(T)</span></button>
    <button><svg><use href="#pyr"/></svg><span>棱锥体(Y)</span></button><hr class="wide">
    <button><svg><use href="#extrude"/></svg><span>拉伸(X)</span></button>
    <button><svg><use href="#revolve"/></svg><span>旋转(R)</span></button>
    <button><svg><use href="#sweep"/></svg><span>扫掠(P)</span></button>
    <button><svg><use href="#loft"/></svg><span>放样(L)</span></button><hr>
    <button><svg><use href="#section"/></svg><span>截面平面(E)</span></button><hr>
    <button><span>曲面(F)</span><svg class="chev"><use href="#chev"/></svg></button>
    <button class="on"><span>网格(M)</span><svg class="chev"><use href="#chev"/></svg></button><hr>
    <button><span>设置(U)</span><svg class="chev"><use href="#chev"/></svg></button>
  </div>
  <div class="menu menu-mesh">
    <button class="on"><span>图元(P)</span><svg class="chev"><use href="#chev"/></svg></button>
    <button><svg><use href="#smooth"/></svg><span>平滑网格(S)</span></button><hr>
    <button><svg><use href="#face3d"/></svg><span>三维面(F)</span></button><hr>
    <button><svg><use href="#revs"/></svg><span>旋转网格(M)</span></button>
    <button><svg><use href="#tabs"/></svg><span>平移网格(T)</span></button>
    <button><svg><use href="#rules"/></svg><span>直纹网格(R)</span></button>
    <button><svg><use href="#edges"/></svg><span>边界网格(D)</span></button>
  </div>
  <div class="menu menu-prim">
    <button class="on"><svg><use href="#mbox"/></svg><span>长方体(B)</span></button>
    <button><svg><use href="#mwedge"/></svg><span>楔体(W)</span></button>
    <button><svg><use href="#mcone"/></svg><span>圆锥体(C)</span></button>
    <button><svg><use href="#msphere"/></svg><span>球体(S)</span></button>
    <button><svg><use href="#mcyl"/></svg><span>圆柱体(Y)</span></button>
    <button><svg><use href="#mtorus"/></svg><span>圆环体(T)</span></button>
    <button><svg><use href="#mpyr"/></svg><span>棱锥体(P)</span></button>
  </div>

  <svg class="pointer" viewBox="0 0 390 220" aria-hidden="true"><path d="M9 12L372 213" stroke-width="4"/><path d="M355 180l24 35M342 204l29 9" stroke-width="4"/></svg>

  <div class="brand">
    <svg class="brand-dots" viewBox="0 0 28 5"><circle cx="6" cy="6" r="5"/><circle cx="22" cy="6" r="5"/></svg>
    <svg class="brand-mark" viewBox="0 0 36 38"><path d="M5 8Q1 9 2 14v16q1 7 8 5l20-12q6-5 0-10L15 3Q8 0 8 8v17q0 4 4 3" /><path d="M14 13l8 5-8 5z" class="solid"/><path d="M24 14v8" class="thin"/></svg>
    <div class="brand-text"><strong>溜溜自学</strong><span>zixue.3D66.COM</span></div>
  </div>
</div>
</body>
</html>
```

FILE: styles.css
```css
* { box-sizing: border-box; }

body {
  margin: 0;
  font-family: "Open Sans", "Noto Sans CJK SC", sans-serif;
  font-size: 9px;
  line-height: 12px;
  color: #222;
  background: #696969;
}

button, input, select {
  margin: 0;
  padding: 0;
  border: 0;
  border-radius: 0;
  background: none;
  color: inherit;
  font: inherit;
  appearance: none;
}

input::placeholder { color: inherit; opacity: 1; }

svg {
  flex: none;
  width: 13px;
  height: 13px;
  fill: none;
  stroke: #555;
}

.sprite { position: absolute; width: 0; height: 0; }
.caret { width: 7px; height: 7px; color: #444; }
.chev { width: 7px; height: 7px; stroke: #555; }
.down { transform: rotate(90deg); }
.up { transform: rotate(-90deg); }
.left { transform: rotate(180deg); }

.app {
  position: relative;
  display: flex;
  flex-direction: column;
  min-height: 100vh;
  overflow: hidden;
}

/* Title and menu bar */
.head { display: flex; }
.logo {
  display: flex;
  align-items: center;
  justify-content: center;
  gap: 1px;
  width: 30px;
  height: 29px;
  border: 1px solid #666;
  background: linear-gradient(#c8c8c8, #8c8c8c);
}
.logo-mark { width: 19px; height: 25px; stroke: none; }
.head-rows { flex: 1; min-width: 0; }
.titlebar {
  display: flex;
  height: 18px;
  background: #fff;
}
.quick, .infocenter {
  display: flex;
  align-items: center;
  background: linear-gradient(#b4b4b4, #8d8d8d);
}
.quick { width: 313px; padding-left: 3px; }
.quick button {
  display: flex;
  justify-content: center;
  width: 18px;
}
.quick .light { color: #fff; }
.light svg { stroke: #eee; }
.faint svg { stroke: #bbb; }
.quick > .caret { margin: 0 2px; }
.quick > .more { width: 14px; }
.workspace-pick {
  display: flex;
  align-items: center;
  flex: 1;
  gap: 2px;
  height: 14px;
  padding: 0 2px;
  background: #cdcdcd;
}
.workspace-pick select { flex: 1; min-width: 0; color: #555; }
.infocenter {
  width: 303px;
  margin-left: 235px;
}
.infocenter .collapse { width: 10px; color: #111; }
.infocenter input {
  width: 132px;
  height: 15px;
  padding: 0 2px;
  background: #f6f6f6;
  color: #777;
  font-style: italic;
}
.infocenter button:not(.collapse, .login) { width: 18px; }
.infocenter button svg { display: block; margin: 0 auto; }
.infocenter .login {
  display: flex;
  gap: 2px;
  align-items: center;
  flex: 1;
  color: #fff;
}
.infocenter .login svg { margin: 0; }
.infocenter .help { margin-left: 6px; }
.wincontrols {
  display: flex;
  flex: 1;
  justify-content: space-around;
  align-items: center;
  padding: 0 2px 0 18px;
}
.wincontrols svg { display: block; width: 9px; height: 9px; stroke: #777; }

.menubar {
  display: flex;
  height: 15px;
  background: linear-gradient(#6e6e6e, #8f8f8f);
  color: #f0f0f0;
}
.menubar > button { width: 46px; line-height: 13px; }
.menubar > button:nth-child(n+8) { width: 48px; }
.menubar > .open { margin-left: 1px; background: #4e4e4e; }
.mdi { display: flex; align-items: center; gap: 3px; margin-left: auto; padding-right: 3px; }
.mdi svg { display: block; width: 9px; height: 9px; stroke: #222; stroke-width: 2; }

/* Horizontal toolbars */
.bar {
  display: flex;
  gap: 4px;
  height: 19px;
  padding: 1px 0 2px 6px;
  border-bottom: 1px solid #8a8a8a;
  background: #5c5c5c;
}
.tools {
  display: flex;
  align-items: center;
  flex: none;
  background: #f0f0f0;
}
.tools-main { min-width: 398px; }
.tools > button {
  display: flex;
  justify-content: center;
  flex: none;
  width: 17px;
}
.tools i { width: 1px; height: 13px; margin: 0 2px 0 1px; background: #999; }
.tools .off svg { stroke: #aaa; color: #fff; }
.tools > .caret { margin: 0 1px; color: #999; }
.combo {
  display: flex;
  align-items: center;
  height: 15px;
  padding: 0 4px;
  background: #c9c9c9;
  color: #666;
}
.combo select { flex: 1; min-width: 0; }
.combo .chev { stroke: #aaa; }
.styles { flex: 1; min-width: 0; margin-left: 3px; font-size: 9px; }
.styles .combo { width: 89px; padding-left: 14px; }
.styles .combo:last-child { flex: 1; min-width: 0; padding-right: 0; }

.bar-low { height: 21px; padding: 2px 0 3px 6px; gap: 8px; }
.workspaces { width: 162px; }
.workspaces .combo { flex: 1; padding-left: 7px; }
.layers { width: 185px; background: #c9c9c9; }
.layers > button { background: #f0f0f0; }
.layer-state { display: flex; flex: 1; gap: 1px; align-items: center; color: #555; }
.layer-state svg { width: 11px; height: 11px; }
.layer-state span { margin-left: 3px; }
.linestyles {
  flex: 1 1 auto;
  max-width: 520px;
  justify-content: flex-end;
  background: #c9c9c9;
  font-family: "Liberation Serif", serif;
}
.linestyles > .chev { margin-right: 4px; stroke: #aaa; }
.linestyles .combo { width: 121px; gap: 4px; border-left: 2px solid #eee; }
.linestyles .narrow { width: 96px; }
.linestyles .plot { width: 90px; padding-left: 6px; }
.stroke { width: 26px; height: 1px; background: #555; }
.long { width: 43px; }

/* Work area */
.work {
  display: flex;
  flex: 1;
  align-items: stretch;
  padding-right: 2px;
}
.side {
  display: flex;
  flex-direction: column;
  align-self: flex-start;
  width: 17px;
  margin: 0 0 0 1px;
  background: #f0f0f0;
}
.side button { display: flex; justify-content: center; align-items: center; height: 16px; flex: none; }
.side svg { width: 13px; height: 13px; }
.side i { height: 1px; margin: 2px 1px; background: #aaa; }
.grip { flex: none; height: 7px; border-top: 1px solid #777; border-bottom: 1px solid #999; background: #555; }
.grip-tall { height: 8px; }
.side-right { margin-left: 3px; height: 399px; overflow: hidden; }
.drawing {
  display: flex;
  flex: 1;
  flex-direction: column;
  min-width: 0;
  margin-left: 4px;
  border-top: 2px solid #8f8f8f;
  border-left: 1px solid #8f8f8f;
}
.canvas-row { display: flex; flex: 1; }
.canvas {
  position: relative;
  flex: 1;
  background-color: #000;
  background-image:
    linear-gradient(90deg, #262626 1px, transparent 1px),
    linear-gradient(#262626 1px, transparent 1px),
    linear-gradient(90deg, #121212 1px, transparent 1px),
    linear-gradient(#121212 1px, transparent 1px);
  background-size: 45px 45px, 45px 45px, 9px 9px, 9px 9px;
  background-position: 38px 45px, 38px 45px, 2px 0, 2px 0;
}
.viewlabel { padding: 3px; color: #e8e8e8; }
.viewcube {
  position: absolute;
  top: 4px;
  right: 8px;
  display: grid;
  grid-template-columns: 14px 46px 14px;
  grid-template-rows: 16px 46px 16px;
  place-items: center;
  color: #bbb;
  font-size: 10px;
}
.ring {
  grid-area: 1 / 1 / 4 / 4;
  width: 66px;
  height: 66px;
  stroke: #3c3c3c;
  stroke-width: 6;
}
.face {
  grid-area: 2 / 2;
  width: 28px;
  height: 28px;
  background: #b4b4b4;
  color: #555;
  font-size: 18px;
  line-height: 26px;
  text-align: center;
}
.n { grid-area: 1 / 2; }
.e { grid-area: 2 / 3; }
.s { grid-area: 3 / 2; }
.w { grid-area: 2 / 1; }
.wcs {
  position: absolute;
  top: 91px;
  right: 29px;
  width: 34px;
  height: 13px;
  padding-left: 3px;
  border: 1px solid #c0c0cc;
  border-radius: 3px;
  background: #8d8d9b;
  color: #444;
  font-size: 8px;
  line-height: 10px;
  text-align: left;
}
.navbar {
  position: absolute;
  top: 122px;
  right: 3px;
  width: 23px;
  height: 156px;
  border-radius: 3px;
  background: #595959;
}
.ucs {
  position: absolute;
  left: 4px;
  bottom: 4px;
  width: 60px;
  height: 56px;
  stroke: #ccc;
}
.vscroll { display: flex; flex-direction: column; align-items: center; width: 14px; background: #f0f0f0; }
.vscroll button { height: 13px; }
.vscroll svg { display: block; }
.vscroll .last { margin-top: auto; }
.vscroll .thumb { width: 11px; height: 12px; background: #c8c8c8; }

.tabs {
  display: flex;
  align-items: center;
  height: 13px;
  margin-bottom: 1px;
  background: #f0f0f0;
}
.tabs button { line-height: 12px; }
.tabnav { display: flex; }
.tabnav button { width: 10px; color: #666; font-family: "DejaVu Sans", sans-serif; font-size: 8px; }
.tabs .current {
  width: 36px;
  background: #000;
  color: #fff;
  font-weight: 700;
  line-height: 13px;
  clip-path: polygon(0 0, 100% 0, 88% 100%, 14% 100%);
}
.tab { width: 30px; }
.slash { width: 5px; height: 13px; stroke: #333; }
.hscroll { display: flex; align-items: center; width: 337px; margin-left: auto; padding: 0 14px 0 4px; border-left: 4px solid #ccc; }
.hscroll button { width: 14px; }
.hscroll .thumb { width: 14px; height: 11px; margin-left: auto; background: #d4d4d4; }

/* Command line */
.command {
  display: flex;
  border-top: 2px solid #5a5a5a;
  background: #c6c6c6;
  font-family: "Noto Sans CJK SC", sans-serif;
  font-size: 10px;
  font-feature-settings: "hwid";
}
.command-grip { width: 12px; border-right: 1px solid #ddd; background: #a9a9a9; }
.command-body { flex: 1; }
.command p { margin: 0; line-height: 12px; white-space: nowrap; }
.command p + p { padding-bottom: 7px; }
.prompt { background: #fff; }
.prompt input {
  display: block;
  width: 60%;
  height: 13px;
  font-feature-settings: "hwid";
}

.status {
  display: flex;
  align-items: center;
  justify-content: space-between;
  height: 16px;
  padding-left: 5px;
  border-top: 1px solid #555;
  background: linear-gradient(#6f6f6f, #929292);
  color: #111;
}
.sizer { width: 10px; height: 10px; align-self: flex-end; stroke: #ddd; stroke-width: 2; }

/* Taskbar */
.taskbar {
  display: flex;
  height: 29px;
  background: #06161c;
  color: #eee;
}
.start { width: 34px; background: #0a1d25; }
.start svg { display: block; width: 12px; height: 12px; margin: 0 auto; fill: #fff; stroke: none; }
.search {
  display: flex;
  align-items: center;
  gap: 7px;
  width: 253px;
  padding: 0 10px 0 7px;
  background: #f0f0f0;
  color: #444;
  font-size: 10px;
}
.search svg { width: 16px; height: 16px; stroke: #222; stroke-width: 2; }
.search input { flex: 1; min-width: 0; }
.search .mic { width: 10px; height: 13px; stroke: #555; stroke-width: 1; }
.task { width: 32px; margin-left: 4px; border-bottom: 2px solid #74c3dd; }
.task svg { display: block; width: 17px; height: 17px; margin: 0 auto; stroke: none; }
.active { background: #394a51; }
.tray {
  display: flex;
  align-items: center;
  gap: 6px;
  margin-left: auto;
  margin-right: 4px;
  padding-top: 2px;
}
.tray svg { width: 12px; height: 12px; stroke: #ddd; }
.tray .wide { margin-left: 4px; }
.clock { display: flex; flex-direction: column; justify-content: center; gap: 2px; width: 62px; text-align: center; }

/* Pull-down menus */
.menu {
  position: absolute;
  display: flex;
  flex-direction: column;
  padding: 1px;
  border: 1px solid #ddd;
  background: #f0f0f0;
  box-shadow: 1px 1px 2px #555;
}
.menu button {
  display: grid;
  grid-template-columns: 12px 1fr 7px;
  column-gap: 9px;
  align-items: center;
  height: 16px;
  padding: 0 5px 0 2px;
  line-height: 14px;
  text-align: left;
  white-space: nowrap;
}
.menu svg { width: 13px; height: 13px; stroke: #556; }
.menu span { grid-column: 2; }
.menu .chev { grid-column: 3; width: 7px; height: 7px; stroke: #444; }
.menu hr { width: auto; height: 1px; margin: 2px 0 2px 22px; border: 0; background: #d0d0d0; }
.menu hr.wide { margin-bottom: 3px; }
.menu .on { background: #91c9f7; }
.menu-draw { left: 309px; top: 33px; width: 120px; padding-bottom: 2px; }
.menu-model { left: 425px; top: 33px; width: 111px; padding-bottom: 2px; }
.menu-mesh { left: 533px; top: 274px; width: 115px; padding-bottom: 2px; }
.menu-prim { left: 644px; top: 274px; width: 93px; padding-bottom: 2px; }

.pointer {
  position: absolute;
  left: 300px;
  top: 60px;
  width: 390px;
  height: 220px;
  stroke: #860c22;
  stroke-linecap: round;
  pointer-events: none;
}

.brand {
  position: absolute;
  right: 55px;
  bottom: 15px;
  display: flex;
  align-items: center;
  gap: 11px;
  width: 180px;
  height: 85px;
  padding-left: 14px;
  background: #22305a;
  color: #dcdde6;
}
.brand-dots {
  position: absolute;
  right: 69px;
  bottom: 100%;
  width: 28px;
  height: 5px;
  fill: #ddd;
  stroke: none;
}
.brand-mark { width: 36px; height: 38px; stroke: #dcdde6; stroke-width: 3; stroke-linejoin: round; }
.brand-mark .solid { fill: #dcdde6; stroke: none; }
.brand-mark .thin { stroke-width: 2; }
.brand-text { display: flex; flex-direction: column; }
.brand strong { font-size: 26px; font-weight: 700; line-height: 28px; }
.brand span { font-family: "DejaVu Sans", sans-serif; font-size: 12px; line-height: 14px; }
```
